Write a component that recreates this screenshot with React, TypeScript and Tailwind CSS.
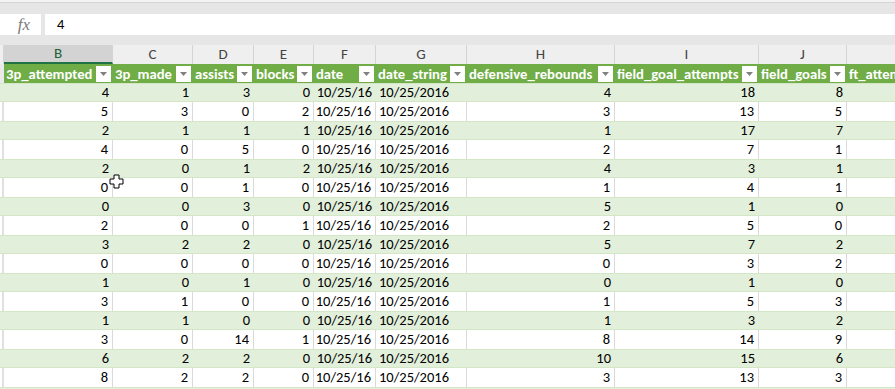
const FONT = "font-['Calibri','Carlito','Liberation_Sans',sans-serif]"

type Col = { letter: string; w: string; name: string; align: 'r' | 'l' }

const cols: Col[] = [
  { letter: 'B', w: 'w-[109px]', name: '3p_attempted', align: 'r' },
  { letter: 'C', w: 'w-[80px]', name: '3p_made', align: 'r' },
  { letter: 'D', w: 'w-[61px]', name: 'assists', align: 'r' },
  { letter: 'E', w: 'w-[60px]', name: 'blocks', align: 'r' },
  { letter: 'F', w: 'w-[62px]', name: 'date', align: 'r' },
  { letter: 'G', w: 'w-[91px]', name: 'date_string', align: 'l' },
  { letter: 'H', w: 'w-[148px]', name: 'defensive_rebounds', align: 'r' },
  { letter: 'I', w: 'w-[144px]', name: 'field_goal_attempts', align: 'r' },
  { letter: 'J', w: 'w-[88px]', name: 'field_goals', align: 'r' },
  { letter: 'K', w: 'w-[124px]', name: 'ft_attempts', align: 'r' },
]

const raw = [
  [4, 1, 3, 0, 4, 18, 8],
  [5, 3, 0, 2, 3, 13, 5],
  [2, 1, 1, 1, 1, 17, 7],
  [4, 0, 5, 0, 2, 7, 1],
  [2, 0, 1, 2, 4, 3, 1],
  [0, 0, 1, 0, 1, 4, 1],
  [0, 0, 3, 0, 5, 1, 0],
  [2, 0, 0, 1, 2, 5, 0],
  [3, 2, 2, 0, 5, 7, 2],
  [0, 0, 0, 0, 0, 3, 2],
  [1, 0, 1, 0, 0, 1, 0],
  [3, 1, 0, 0, 1, 5, 3],
  [1, 1, 0, 0, 1, 3, 2],
  [3, 0, 14, 1, 8, 14, 9],
  [6, 2, 2, 0, 10, 15, 6],
  [8, 2, 2, 0, 3, 13, 3],
]

const rows: string[][] = raw.map((r) => [
  String(r[0]), String(r[1]), String(r[2]), String(r[3]),
  '10/25/16', '10/25/2016',
  String(r[4]), String(r[5]), String(r[6]), '',
])

const FilterButton = () => (
  <span className="flex h-[16px] w-[15px] shrink-0 items-center justify-center bg-white">
    <svg width="7" height="4" viewBox="0 0 7 4">
      <path d="M0 0 H7 L3.5 4 Z" fill="#808080" />
    </svg>
  </span>
)

const CursorCross = () => (
  <svg className="absolute left-[109px] top-[174px]" width="15" height="15" viewBox="0 0 15 15">
    <path d="M5 1 H10 V5 H14 V10 H10 V14 H5 V10 H1 V5 H5 Z" fill="#fff" stroke="#000" strokeWidth="1" />
  </svg>
)

const App = () => (
  <div className={`relative h-[389px] w-[895px] overflow-hidden bg-[#e6e6e6] ${FONT} text-black`}>
    {/* title strip */}
    <div className="h-[3px] border-b border-[#d4d4d4] bg-[#f3f3f3]" />
    <div className="h-[11px]" />
    {/* formula bar */}
    <div className="flex h-[21px] gap-[4px]">
      <div className="flex w-[41px] shrink-0 items-center justify-end bg-white pr-[11px]">
        <span className="font-['Liberation_Serif',serif] text-[17px] italic leading-none text-[#7a7a7a]">fx</span>
      </div>
      <div className="flex flex-1 items-center bg-white pl-[12px] text-[14.5px]">4</div>
    </div>
    <div className="h-[10px]" />
    {/* column letters */}
    <div className="flex h-[19px] bg-[#efefef] text-[15px] leading-none text-[#444]">
      <div className="w-[4px] shrink-0 border-r border-[#d4d4d4]" />
      {cols.map((c, i) => (
        <div
          key={c.letter}
          className={`${c.w} flex shrink-0 items-center justify-center border-r border-[#d4d4d4] ${i === 0 ? 'border-b-2 border-b-[#217346] bg-[#d3d3d3] text-[#215e3a]' : ''}`}
        >
          {c.letter}
        </div>
      ))}
    </div>
    {/* table header */}
    <div className="flex h-[19px] bg-[#70ad47] text-[14.67px] font-bold text-white">
      <div className="w-[4px] shrink-0 bg-[#eaeaea]" />
      {cols.map((c) => (
        <div key={c.name} className={`${c.w} flex shrink-0 items-center justify-between overflow-hidden pl-[2px] pr-[2px]`}>
          <span className="whitespace-nowrap">{c.name}</span>
          {c.letter !== 'K' && <FilterButton />}
        </div>
      ))}
    </div>
    {/* data rows */}
    {[...rows, null].map((r, ri) => {
      const green = ri % 2 === 0
      return (
        <div
          key={ri}
          className={`flex h-[19px] text-[14.5px] ${green ? 'border-y border-[#d3e6c6] bg-[#e2efda]' : 'bg-white'}`}
        >
          <div className={`w-[4px] shrink-0 ${green ? '' : 'border-r-2 border-[#e0e0e0]'}`} />
          {cols.map((c, ci) => (
            <div
              key={c.letter}
              className={`${c.w} flex shrink-0 items-center whitespace-nowrap ${c.align === 'r' ? 'justify-end pr-[4px]' : 'justify-start pl-[3px]'} ${green ? '' : 'border-r border-[#dadada]'}`}
            >
              {r ? r[ci] : ''}
            </div>
          ))}
        </div>
      )
    })}
    <CursorCross />
  </div>
)

export default App
